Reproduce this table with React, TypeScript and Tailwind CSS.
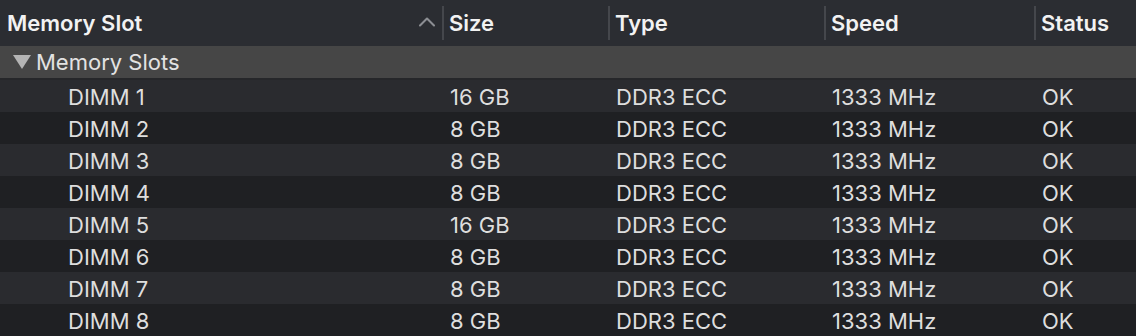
import { ChevronUp } from "lucide-react";

const slots = [
  { name: "DIMM 1", size: "16 GB" },
  { name: "DIMM 2", size: "8 GB" },
  { name: "DIMM 3", size: "8 GB" },
  { name: "DIMM 4", size: "8 GB" },
  { name: "DIMM 5", size: "16 GB" },
  { name: "DIMM 6", size: "8 GB" },
  { name: "DIMM 7", size: "8 GB" },
  { name: "DIMM 8", size: "8 GB" },
];

const cols = "grid grid-cols-[442px_166px_216px_210px_1fr]";

function HeaderCell({ label, first }: { label: string; first?: boolean }) {
  return (
    <div className="flex items-center h-full">
      {!first && <div className="w-[2px] h-[34px] bg-[#45474c]" />}
      <span className={first ? "pl-[7px]" : "pl-[5px]"}>{label}</span>
    </div>
  );
}

export default function App() {
  return (
    <div
      className="w-[1136px] h-[336px] overflow-hidden bg-[#1f2023] text-[22px] leading-none"
      style={{ fontFamily: "Inter, 'Noto Sans', sans-serif" }}
    >
      {/* column header */}
      <div className={`${cols} h-[46px] bg-[#2b2d32] text-[#f2f2f2] font-semibold`}>
        <div className="flex items-center justify-between h-full">
          <span className="pl-[7px]">Memory Slot</span>
          <ChevronUp className="w-[28px] h-[28px] mr-[1px] -mt-[3px] text-[#8c8e93]" strokeWidth={1.8} />
        </div>
        <HeaderCell label="Size" />
        <HeaderCell label="Type" />
        <HeaderCell label="Speed" />
        <HeaderCell label="Status" />
      </div>

      {/* group row */}
      <div className="flex items-center h-[34px] bg-[#464646] border-b-2 border-[#26272a] text-[#e2e2e2]">
        <svg width="18" height="14" viewBox="0 0 18 14" className="ml-[13px] mr-[5px]">
          <polygon points="0,0 18,0 9,14" fill="#b4b4b4" />
        </svg>
        <span>Memory Slots</span>
      </div>

      {/* rows */}
      {slots.map((s, i) => (
        <div
          key={s.name}
          className={`${cols} h-[32px] items-center text-[#dedede] ${i % 2 === 0 ? "bg-[#2a2b2f]" : "bg-[#1f2023]"}`}
        >
          <span className="pl-[68px] pt-[1px]">{s.name}</span>
          <span className="pl-[8px] pt-[1px]">{s.size}</span>
          <span className="pl-[8px] pt-[1px]">DDR3 ECC</span>
          <span className="pl-[8px] pt-[1px]">1333 MHz</span>
          <span className="pl-[8px] pt-[1px]">OK</span>
        </div>
      ))}
    </div>
  );
}
